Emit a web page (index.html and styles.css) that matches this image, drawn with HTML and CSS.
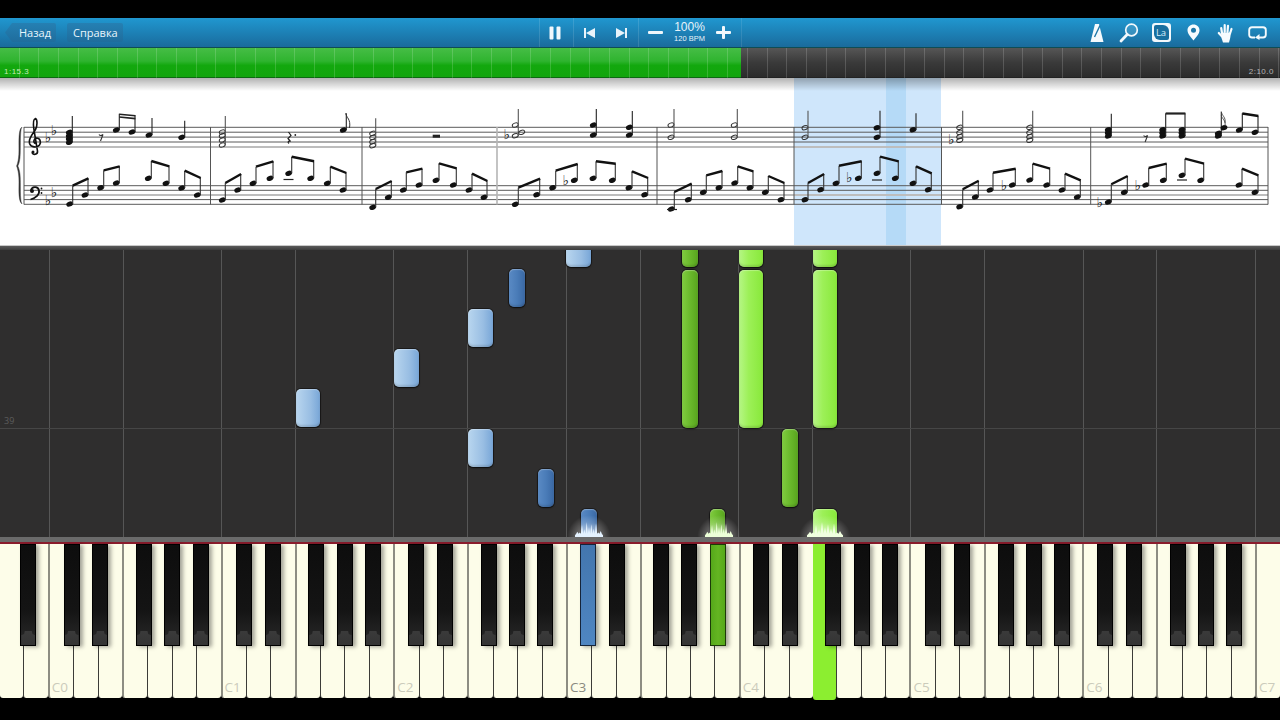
FILE: index.html
```html
<!DOCTYPE html>
<html lang="ru">
<head>
    <meta charset="UTF-8">
    <meta name="viewport" content="width=device-width, initial-scale=1.0">
    <title>Synthesia</title>
    <link rel="stylesheet" href="styles.css">
</head>
<body>
    <div class="letterbox-top"></div>

    <header class="toolbar">
        <div class="toolbar-left">
            <button class="tool-btn back-btn">Назад</button>
            <button class="tool-btn">Справка</button>
        </div>

        <div class="transport">
            <div class="transport-cell pause-cell">
                <svg width="12" height="14" viewBox="0 0 12 14"><rect x="0.5" y="0.5" width="4" height="13" rx="1" fill="#f2f8fc"/><rect x="7.5" y="0.5" width="4" height="13" rx="1" fill="#f2f8fc"/></svg>
            </div>
            <div class="transport-cell skip-cell">
                <svg width="11" height="10" viewBox="0 0 11 10"><rect x="0" y="0" width="2" height="10" fill="#e8f3fa"/><path d="M11 0V10L2 5Z" fill="#e8f3fa"/></svg>
                <svg width="11" height="10" viewBox="0 0 11 10"><path d="M0 0V10L9 5Z" fill="#e8f3fa"/><rect x="9" y="0" width="2" height="10" fill="#e8f3fa"/></svg>
            </div>
            <div class="transport-cell tempo-cell">
                <svg width="15" height="3" viewBox="0 0 15 3"><rect width="15" height="3" rx="1" fill="#eef6fb"/></svg>
                <div class="tempo-text">
                    <span class="tempo-pct">100%</span>
                    <span class="tempo-bpm">120 BPM</span>
                </div>
                <svg width="15" height="13" viewBox="0 0 15 13"><rect y="5" width="15" height="3" rx="1" fill="#f2f8fc"/><rect x="6" width="3" height="13" rx="1" fill="#f2f8fc"/></svg>
            </div>
        </div>

        <div class="toolbar-right">
            <div class="tool-icon">
                <svg width="16" height="20" viewBox="0 0 16 20"><path d="M6 1H10L14.5 19H1.5Z" fill="#f4fafd"/><path d="M5.5 14L11 2.5" stroke="#1c77a8" stroke-width="1.4"/></svg>
            </div>
            <div class="tool-icon">
                <svg width="20" height="20" viewBox="0 0 20 20"><circle cx="12.5" cy="7" r="5.8" fill="rgba(255,255,255,.12)" stroke="#f2f8fc" stroke-width="1.7"/><path d="M8.2 11.5L2 18" stroke="#f2f8fc" stroke-width="2.8" stroke-linecap="round"/></svg>
            </div>
            <div class="tool-icon">
                <div class="la-box"><span class="la-inner">La</span></div>
            </div>
            <div class="tool-icon">
                <svg width="13" height="17" viewBox="0 0 13 17"><path d="M6.5 0.5C3 0.5 0.5 3 0.5 6.3C0.5 9.8 4 13.5 6.5 16.5C9 13.5 12.5 9.8 12.5 6.3C12.5 3 10 0.5 6.5 0.5Z" fill="#f6fbfe"/><circle cx="6.5" cy="6.3" r="2.5" fill="#1c77a8"/></svg>
            </div>
            <div class="tool-icon">
                <svg width="17" height="20" viewBox="0 0 17 20"><g stroke="#f6fbfe" stroke-width="2.2" stroke-linecap="round"><path d="M5 10L4.2 5"/><path d="M7.7 9V2"/><path d="M10.5 9L11 2.8"/><path d="M13 10.5L14.5 6"/><path d="M5 13.5L1.8 10"/></g><path d="M4 9.5H14L13.2 15L12 19.5H6L4.5 15Z" fill="#f6fbfe"/></svg>
            </div>
            <div class="tool-icon">
                <svg width="19" height="14" viewBox="0 0 19 14"><path d="M7 11.5H4C2.3 11.5 1.2 10.4 1.2 8.8V4C1.2 2.4 2.3 1.2 4 1.2H15C16.7 1.2 17.8 2.4 17.8 4V8.8C17.8 10.4 16.7 11.5 15 11.5H11" fill="none" stroke="#f4fafd" stroke-width="1.9"/><path d="M7 11.5L11.5 8V14Z" fill="#f4fafd"/></svg>
            </div>
        </div>
    </header>

    <div class="progress">
        <div class="progress-done"><span class="progress-time">1:15.3</span></div>
        <div class="progress-rest"><span class="progress-time rest-time">2:10.0</span></div>
    </div>

    <section class="sheet" id="sheet">
        <div class="sheet-measure"></div>
        <div class="sheet-beat"></div>
    </section>

    <div class="sheet-divider"></div>

    <section class="roll" id="roll">
        <span class="roll-number">39</span>
    </section>

    <div class="key-strip"></div>

    <section class="keyboard" id="keyboard"></section>

    <div class="letterbox-bottom"></div>

    <script src="app.js"></script>
</body>
</html>
```
FILE: styles.css
```css
html, body {
    margin: 0;
    padding: 0;
    background: #000;
}
body {
    width: 1280px;
    height: 720px;
    overflow: hidden;
    display: flex;
    flex-direction: column;
    font-family: "Open Sans", "Noto Sans", sans-serif;
}
.letterbox-top {
    height: 18px;
    background: #000;
}
.letterbox-bottom {
    height: 22px;
    background: #000;
}

/* toolbar */
.toolbar {
    height: 29px;
    display: grid;
    grid-template-columns: 1fr auto 1fr;
    background: linear-gradient(#2097d0, #1a6b9c);
    border-bottom: 1px solid #0e4d55;
}
.toolbar-left {
    display: flex;
    align-items: center;
    gap: 11px;
    padding-left: 5px;
}
.tool-btn {
    height: 19px;
    padding: 0 5px 0 6px;
    border: none;
    border-radius: 2px;
    background: linear-gradient(#2580b3, #1f6d9d);
    color: #e8f5fc;
    font-family: inherit;
    font-size: 11px;
    line-height: 19px;
}
.back-btn {
    padding: 0 5px 0 14px;
    clip-path: polygon(7px 0, 100% 0, 100% 100%, 7px 100%, 0 50%);
}
.transport {
    display: flex;
    border-right: 1px solid rgba(255,255,255,0.1);
}
.transport-cell {
    display: flex;
    align-items: center;
    border-left: 1px solid rgba(255,255,255,0.12);
    box-sizing: border-box;
}
.pause-cell {
    width: 34px;
    justify-content: center;
    padding-right: 2px;
}
.skip-cell {
    width: 65px;
    justify-content: space-around;
}
.tempo-cell {
    width: 103px;
    padding: 0 9px;
    justify-content: space-between;
}
.tempo-text {
    display: flex;
    flex-direction: column;
    align-items: center;
    font-family: "Liberation Sans", sans-serif;
    color: #e6f3fa;
}
.tempo-pct {
    font-size: 12px;
    line-height: 11px;
}
.tempo-bpm {
    font-size: 7.5px;
    line-height: 11px;
}
.toolbar-right {
    display: flex;
    justify-content: flex-end;
    align-items: center;
    padding-right: 7px;
}
.tool-icon {
    width: 32px;
    display: flex;
    justify-content: center;
    align-items: center;
}
.la-box {
    width: 19px;
    height: 19px;
    box-sizing: border-box;
    border: 2px solid #f2f8fc;
    border-radius: 3px;
    background: #f2f8fc;
}
.la-inner {
    display: block;
    height: 15px;
    border-radius: 2px 6px 2px 6px;
    background: #1a6f9f;
    color: #d8edf8;
    font-size: 9.5px;
    line-height: 15px;
    text-align: center;
}

/* progress bar */
.progress {
    position: relative;
    height: 30px;
    display: flex;
}
.progress::after {
    content: "";
    position: absolute;
    inset: 0;
    background: repeating-linear-gradient(90deg, transparent 0, transparent 18.68px, rgba(255,255,255,0.16) 18.68px, rgba(255,255,255,0.16) 19.68px);
}
.progress-done {
    width: 741px;
    display: flex;
    align-items: flex-end;
    padding: 0 0 1px 4px;
    box-sizing: border-box;
    background: linear-gradient(#46bd46, #2fb42f 45%, #13a80e 60%, #12a50d);
    border-bottom: 1px solid #0c6a12;
}
.progress-rest {
    flex: 1;
    display: flex;
    align-items: flex-end;
    justify-content: flex-end;
    padding: 0 6px 1px 0;
    background: linear-gradient(#565656, #3a3a3a 50%, #2b2b2b);
    border-bottom: 1px solid #222;
}
.progress-time {
    position: relative;
    z-index: 1;
    font-family: "Liberation Sans", sans-serif;
    font-size: 8px;
    line-height: 9px;
    letter-spacing: 0.5px;
    color: #c4ecb4;
}
.rest-time {
    color: #b5b5b5;
}

/* sheet music */
.sheet {
    position: relative;
    height: 167px;
    background: #fff;
}
.sheet::after {
    content: "";
    position: absolute;
    left: 0;
    right: 0;
    top: 0;
    height: 13px;
    background: linear-gradient(rgba(0,0,0,0.3), rgba(0,0,0,0));
}
.sheet-measure {
    position: absolute;
    left: 794px;
    top: 0;
    width: 147px;
    height: 100%;
    background: #cfe6fb;
}
.sheet-beat {
    position: absolute;
    left: 886px;
    top: 0;
    width: 20px;
    height: 100%;
    background: #b5daf7;
}
.score {
    position: absolute;
    left: 0;
    top: 0;
}
.flat {
    font-family: "DejaVu Sans", sans-serif;
    font-size: 14px;
    fill: #111;
}
.sheet-divider {
    height: 5px;
    background: linear-gradient(#c9c9c9 0, #c9c9c9 1px, #5a5a5a 1px, #3c3c3c);
}

/* falling notes */
.roll {
    position: relative;
    height: 287px;
    background: #2f2e2e;
    overflow: hidden;
}
.roll-number {
    position: absolute;
    left: 4px;
    top: 164px;
    font-size: 9px;
    color: #5c5c5c;
}
.grid-line {
    position: absolute;
    top: 0;
    bottom: 0;
    width: 1px;
    background: #565656;
}
.grid-row {
    position: absolute;
    left: 0;
    right: 0;
    top: 178px;
    height: 1px;
    background: #464646;
}
.note {
    position: absolute;
    box-sizing: border-box;
    border-radius: 5px;
    box-shadow: 0 0 0 1px rgba(0,0,0,0.4), 0 1px 2px rgba(0,0,0,0.55), inset 0 1px 1px rgba(255,255,255,0.3), inset 0 -2px 2px rgba(0,0,0,0.12);
}
.note.light-blue {
    background: linear-gradient(90deg, #b9d6ef, #99bee3 60%, #78a6d7);
}
.note.dark-blue {
    background: linear-gradient(90deg, #5a8ac4, #4a7cb8 50%, #3a68a4);
}
.note.light-green {
    background: linear-gradient(90deg, #b6f686, #9df058 40%, #88e83a);
}
.note.dark-green {
    background: linear-gradient(90deg, #80cc40, #6ab92c 50%, #58a41e);
}
.note.hit::after {
    content: "";
    position: absolute;
    left: 0;
    right: 0;
    bottom: 0;
    height: 60%;
    background: linear-gradient(rgba(255,255,255,0), rgba(255,255,255,0.55));
}
.spark-glow {
    position: absolute;
    height: 22px;
    bottom: 0;
    background: radial-gradient(ellipse at 50% 100%, rgba(255,255,255,0.55), rgba(255,255,255,0) 70%);
}
.spark {
    position: absolute;
    bottom: 0;
}

/* keyboard */
.key-strip {
    height: 7px;
    background: linear-gradient(#6a6a6a, #6a6a6a 5px, #8a1c2c 5px, #8a1c2c);
}
.keyboard {
    position: relative;
    z-index: 1;
    height: 154px;
    display: flex;
}
.white-key {
    position: relative;
    flex: 1;
    box-sizing: border-box;
    background: #fdfde9;
    border-left: 1px solid #3c3c38;
    border-radius: 0 0 3px 3px;
}
.white-key.first {
    border-left: none;
}
.white-key.wide {
    border-left: 2px solid #8d8d82;
}
.white-key.pressed {
    height: 156px;
    background: #8cee30;
    border-left: none;
}
.key-label {
    position: absolute;
    left: 2px;
    bottom: 3px;
    font-family: "Open Sans", sans-serif;
    font-size: 13.5px;
    line-height: 16px;
    color: #cbcbbb;
}
.key-label.active {
    color: #8a8a80;
}
.black-key {
    position: absolute;
    top: 0;
    width: 16px;
    height: 102px;
    box-sizing: border-box;
    border: 1px solid #000;
    background: linear-gradient(#0d0d0d, #141414 65%, #2a2a2a 100%);
    box-shadow: 3px 1px 4px rgba(0,0,0,0.35);
}
.black-key::after {
    content: "";
    position: absolute;
    left: 0;
    right: 0;
    bottom: 0;
    height: 14px;
    background: linear-gradient(#3a3a3a, #343434);
    clip-path: polygon(25% 0, 75% 0, 80% 22%, 100% 30%, 100% 100%, 0 100%, 0 30%, 20% 22%);
}
.black-key.blue {
    background: linear-gradient(#4376ae, #4f86c2);
    border-color: #15243a;
}
.black-key.green {
    background: linear-gradient(90deg, #55a81a, #64b522 50%, #55a81a);
    border-color: #1c3a08;
}
.black-key.blue::after,
.black-key.green::after {
    display: none;
}
```
FILE: app.js
```js
// Synthesia screen: keyboard, falling notes and score are built from the data below
const WHITE = 1280 / 52;
const C0_X = 2 * WHITE;
const OCTAVE = 7 * WHITE;
const BLACK_OFFSETS = [0.906, 2.08, 3.85, 5.0, 6.15];

// keyboard
const keyboard = document.getElementById('keyboard');
for (let i = 0; i < 52; i++) {
    const key = document.createElement('div');
    const note = (i + 5) % 7;
    key.className = 'white-key';
    if (i === 0) key.classList.add('first');
    else if (note === 0 || note === 3) key.classList.add('wide');
    if (i === 33) key.classList.add('pressed');
    if (note === 0) {
        const octave = (i - 2) / 7;
        const label = document.createElement('span');
        label.className = octave === 3 ? 'key-label active' : 'key-label';
        label.textContent = 'C' + octave;
        key.appendChild(label);
    }
    keyboard.appendChild(key);
}

function addBlack(center, state) {
    const key = document.createElement('div');
    key.className = state ? 'black-key ' + state : 'black-key';
    key.style.left = (center - 8) + 'px';
    keyboard.appendChild(key);
}

addBlack(C0_X - 0.85 * WHITE);
for (let oct = 0; oct < 7; oct++) {
    BLACK_OFFSETS.forEach((off, n) => {
        let state = '';
        if (oct === 3 && n === 0) state = 'blue';
        if (oct === 3 && n === 4) state = 'green';
        addBlack(C0_X + oct * OCTAVE + off * WHITE, state);
    });
}

// falling notes, [x, y, w, h, colour, hit]
const ROLL_TOP = 250;
const NOTES = [
    [295.5, 389, 24.5, 38, 'light-blue'],
    [394, 349, 24.5, 38, 'light-blue'],
    [468, 309, 24.5, 38, 'light-blue'],
    [468, 429, 24.5, 38, 'light-blue'],
    [566, 230, 24.5, 37, 'light-blue'],
    [509, 269, 16, 38, 'dark-blue'],
    [537.5, 469, 16, 38, 'dark-blue'],
    [581, 509, 15.5, 34, 'dark-blue', true],
    [682, 230, 15.5, 37, 'dark-green'],
    [682, 269.5, 15.5, 158, 'dark-green'],
    [738.5, 230, 24.5, 37, 'light-green'],
    [738.5, 269.5, 24.5, 158, 'light-green'],
    [812.5, 230, 24.5, 37, 'light-green'],
    [812.5, 269.5, 24.5, 158, 'light-green'],
    [782, 429, 16, 78, 'dark-green'],
    [709.5, 509, 15.5, 34, 'dark-green', true],
    [812.5, 509, 24.5, 34, 'light-green', true]
];
const GRID_KEYS = [2, 5, 9, 12, 16, 19, 23, 26, 30, 33, 37, 40, 44, 47, 51];

const roll = document.getElementById('roll');
GRID_KEYS.forEach(k => {
    const line = document.createElement('div');
    line.className = 'grid-line';
    line.style.left = Math.floor(k * WHITE) + 'px';
    roll.appendChild(line);
});
const gridRow = document.createElement('div');
gridRow.className = 'grid-row';
roll.appendChild(gridRow);

NOTES.forEach(([x, y, w, h, colour, hit]) => {
    const el = document.createElement('div');
    el.className = 'note ' + colour + (hit ? ' hit' : '');
    el.style.left = x + 'px';
    el.style.top = (y - ROLL_TOP) + 'px';
    el.style.width = w + 'px';
    el.style.height = h + 'px';
    roll.appendChild(el);
});

// sparks at the keyboard edge, [center, half width, colour]
const SPARKS = [
    [588.5, 14, '#e4f2ff'],
    [718.5, 14, '#ecffd8'],
    [824.5, 18, '#f0ffe0']
];
const SPIKES = [0.12, 0.35, 0.3, 0.8, 0.5, 1, 0.65, 0.85, 0.55, 0.9, 0.3, 0.4, 0.12];

function sparkPoints(half) {
    const height = 15;
    const step = half * 2 / (SPIKES.length - 1);
    const pts = [[0, height]];
    SPIKES.forEach((s, i) => {
        pts.push([i * step, height - s * height]);
        if (i < SPIKES.length - 1) pts.push([(i + 0.5) * step, height - 0.22 * height]);
    });
    pts.push([half * 2, height]);
    return pts.map(p => p[0].toFixed(1) + ',' + p[1].toFixed(1)).join(' ');
}

SPARKS.forEach(([cx, half, colour]) => {
    const glow = document.createElement('div');
    glow.className = 'spark-glow';
    glow.style.left = (cx - half - 8) + 'px';
    glow.style.width = (2 * half + 16) + 'px';
    roll.appendChild(glow);

    const svg = document.createElementNS('http://www.w3.org/2000/svg', 'svg');
    svg.setAttribute('class', 'spark');
    svg.setAttribute('width', 2 * half);
    svg.setAttribute('height', 15);
    svg.style.left = (cx - half) + 'px';
    svg.innerHTML = '<polygon points="' + sparkPoints(half) + '" fill="' + colour + '"/>';
    roll.appendChild(svg);
});

// score: the sheet's top edge is y=78, coordinates below are page coordinates
const TREBLE = [127.3, 132.2, 137.1, 142, 146.9];
const BASS = [185.7, 190.3, 195, 199.6, 204.3];
const BARS = [24, 210.5, 362, 657, 794, 941.5, 1090.7, 1268];
const HEAD_INK = '#111';
let ink = '';

function line(x1, y1, x2, y2, w, color) {
    ink += `<line x1="${x1}" y1="${y1}" x2="${x2}" y2="${y2}" stroke="${color || '#222'}" stroke-width="${w}"/>`;
}
function head(x, y, open) {
    const rot = `rotate(-20 ${x} ${y})`;
    if (open) ink += `<ellipse cx="${x}" cy="${y}" rx="3.1" ry="2" transform="${rot}" fill="none" stroke="#333" stroke-width="1"/>`;
    else ink += `<ellipse cx="${x}" cy="${y}" rx="3.5" ry="2.5" transform="${rot}" fill="${HEAD_INK}"/>`;
}
function flat(x, y) {
    ink += `<text class="flat" x="${x}" y="${y}" text-anchor="middle">♭</text>`;
}
// chord: heads share one stem, stem is at x + 3
function chord(x, ys, top, open) {
    ys.forEach(y => head(x, y, open));
    line(x + 3, Math.max(...ys), x + 3, top, 1.1, open ? '#555' : '#222');
}
// beamed pair: [x1, y1, x2, y2, beam y1, beam y2]
function pair([x1, y1, x2, y2, by1, by2]) {
    head(x1, y1);
    head(x2, y2);
    line(x1 + 3, y1, x1 + 3, by1, 1.1, '#333');
    line(x2 + 3, y2, x2 + 3, by2, 1.1, '#333');
    line(x1 + 3, by1, x2 + 3.4, by2, 2.4, '#111');
}

TREBLE.forEach((y, i) => line(24, y, 1268, y, i === 4 ? 2 : 1, i === 4 ? '#bdbdbd' : '#5a5a5a'));
BASS.forEach((y, i) => line(24, y, 1268, y, i === 2 ? 2 : 1, i === 2 ? '#bdbdbd' : '#5a5a5a'));
BARS.forEach(x => line(x, 127, x, 204.5, 1, '#555'));
line(497, 127, 497, 204.5, 1.6, '#b5b5b5');

// bass part
const BASS_PAIRS = [
    [69.7, 204, 85, 195, 185.7, 178.3], [100.7, 187.7, 116.3, 183, 170.3, 166.3],
    [148.3, 178.3, 166, 183.3, 161, 166.3], [181.7, 188, 197.3, 195, 170.7, 178],
    [222.3, 200, 237.7, 190, 183, 174], [253, 183.3, 270, 178.3, 166.7, 161.3],
    [288.7, 173.3, 310.7, 178.3, 156.7, 161.3], [327.3, 183.3, 343, 190, 166.7, 173],
    [372.7, 207.3, 388.3, 197.3, 189, 181], [403.3, 190, 419, 185, 172.3, 168.7],
    [436, 180.3, 453.3, 185, 163.3, 168.3], [469, 190, 484, 197.3, 173.7, 181],
    [515.3, 204.3, 536.7, 194.7, 187.7, 178.7], [552.7, 187.7, 574.3, 180.3, 170.7, 164],
    [593, 178.3, 612.3, 180.3, 161.3, 163.7], [629, 187.7, 644.7, 194.7, 171.3, 178],
    [671.3, 209, 688.3, 199.7, 192, 183.7], [703.3, 192.3, 719, 187.7, 175.3, 171],
    [734.7, 183, 750, 187.7, 166.3, 171.3], [765.3, 192.3, 781, 199.7, 176, 183],
    [805, 199.7, 820.7, 189.7, 183, 174], [836, 183.3, 858.3, 178.3, 165.7, 161.3],
    [877, 173.3, 895.3, 178.3, 156.7, 161.3], [913, 183.3, 928.3, 189.7, 166.3, 173.3],
    [959.7, 206.7, 975.3, 197, 189.3, 180.7], [990, 190, 1012.3, 185, 172.7, 168.7],
    [1029.7, 180, 1046.7, 185, 163.7, 168.7], [1062, 190, 1077.3, 197, 173.7, 180.3],
    [1108.3, 202, 1124.3, 192.3, 184.3, 176], [1145.7, 185, 1163.3, 180.3, 168, 163.7],
    [1182, 175.3, 1200.7, 180.3, 158.7, 163.7], [1239, 185, 1255, 192.3, 168.7, 175.3]
];
BASS_PAIRS.forEach(pair);
[[288.5, 179.5], [877, 180], [1182, 180], [672, 209.5]].forEach(([x, y]) => line(x - 5, y, x + 5, y, 1.2, '#222'));
[[565.7, 185], [849.3, 182], [1004, 190], [1099.7, 207], [1137.7, 190]].forEach(([x, y]) => flat(x, y));

// treble part
chord(69.3, [132.3, 135.7, 138.7, 142.3], 116);
chord(116.3, [130], 113.7);
chord(132, [132], 115.3);
line(119.3, 114.2, 135.4, 115.8, 1.6, '#222');
line(119.3, 117, 135.4, 118.6, 1.6, '#222');
chord(149, [135], 118);
chord(181.7, [137.3], 120.7);
chord(222.3, [132, 135.7, 140, 145], 116, true);
chord(343.3, [130], 113.3);
chord(372.7, [133.3, 137.3, 141.7, 145.7], 118.3, true);
chord(515.3, [125, 135.7], 109, true);
head(521.7, 132.3, true);
chord(593.3, [125, 135], 109);
chord(629.3, [127.3, 135], 111);
chord(671, [125, 137.3], 109, true);
chord(734.3, [125, 137.3], 109, true);
chord(805, [127.7, 137.3], 110.7, true);
chord(877, [127.7, 137.3], 110.7);
chord(913, [129.7], 113.3);
chord(959.7, [127.3, 132.3, 136.7, 140.3], 110.7, true);
chord(1029.7, [127.3, 132.3, 136.7, 140.3], 110.7, true);
chord(1108.3, [129.7, 132.7, 136], 113.7);
chord(1162.7, [129.7, 132.7, 136], 113.3);
chord(1182, [129.7, 132.7, 136], 113.3);
line(1165.7, 113.5, 1185.4, 113.5, 2.2, '#222');
chord(1218.3, [133.3, 136], 111.7);
head(1224, 127.7);
chord(1239.3, [130], 113.3);
chord(1255, [132.3], 116);
line(1242.3, 113.5, 1258.4, 116, 2.4, '#111');
[[506.7, 139], [951.3, 144]].forEach(([x, y]) => flat(x, y));

// rests, flags and clefs
let shapes = '';
shapes += '<path d="M99 134.5C100 136 102 135.5 103 134.5L100.5 141" fill="none" stroke="#333" stroke-width="1.1"/>';
shapes += '<path d="M1143.6 135.5C1144.6 137 1146.6 136.5 1147.6 135.5L1145.1 142" fill="none" stroke="#333" stroke-width="1.1"/>';
shapes += '<path d="M288.5 132L291 135.5L288 138.5L290.5 141.5C288 140.5 287.5 142.5 289 143.5" fill="none" stroke="#222" stroke-width="1.2"/><circle cx="295.3" cy="135" r="0.9" fill="#222"/>';
shapes += '<rect x="432.7" y="134.7" width="7.3" height="3" fill="#222"/>';
shapes += '<path d="M345.7 113.3C346.5 118 351 119 349.5 128" fill="none" stroke="#333" stroke-width="1"/>';
shapes += '<path d="M1221.3 111.7C1222 116 1226 117 1225 123M1221.3 115.5C1222 119 1226 120 1225 126" fill="none" stroke="#444" stroke-width="0.9"/>';
shapes += '<path d="M35.5 143.5C33 142.5 33.5 138.5 36.5 138C40 138 41.5 142 39.5 145C37 148 31 147.5 29.5 143.5C28 138.5 33 133.5 35.5 129.5C37.5 126 37.5 119.5 35.5 118.5C33.5 119 33 124 34 130L37.5 151C38 154.5 33 155.5 32 152.5" fill="none" stroke="#111" stroke-width="1.6"/><circle cx="33" cy="152" r="1.5" fill="#111"/>';
shapes += '<path d="M31 190.5C31.5 186.5 38 185.5 39 190.5C39.8 194.5 36 198 30.5 199.5" fill="none" stroke="#111" stroke-width="1.8"/><circle cx="32" cy="191" r="2" fill="#111"/><circle cx="41.5" cy="188.5" r="0.9" fill="#111"/><circle cx="41.5" cy="193" r="0.9" fill="#111"/>';
shapes += '<path d="M22 127C17 130 20 150 18.5 158C18 162 17 165 16.5 166C17 167 18 170 18.5 174C20 184 17 200 22 204C19.5 200 21 184 20 174C19.5 170 18.5 167 17.8 166C18.5 165 19.5 162 20 158C21 150 19.5 130 22 127Z" fill="#333" stroke="#333" stroke-width="0.4"/>';
ink += shapes;
[[48, 142], [54, 135], [48, 205], [54, 197]].forEach(([x, y]) => flat(x, y));

const score = document.createElementNS('http://www.w3.org/2000/svg', 'svg');
score.setAttribute('class', 'score');
score.setAttribute('width', 1280);
score.setAttribute('height', 167);
score.setAttribute('viewBox', '0 78 1280 167');
score.innerHTML = ink;
document.getElementById('sheet').appendChild(score);
```
